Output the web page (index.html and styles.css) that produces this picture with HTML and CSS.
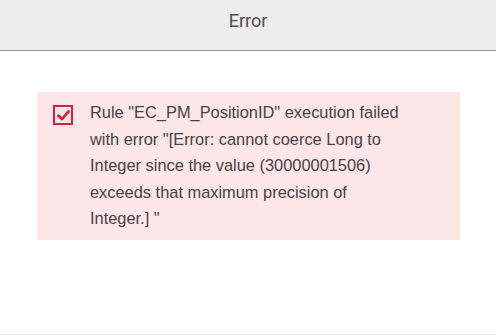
FILE: index.html
```html
<!DOCTYPE html>
<html>
<head>
<meta charset="utf-8">
<link rel="stylesheet" href="styles.css">
</head>
<body>
<div class="page">
  <header class="header">Error</header>
  <main class="main">
    <div class="alert">
      <span class="check">
        <svg width="13" height="13" viewBox="0 0 12 12"><path d="M1.4 6.3 L4.6 9.3 L10.6 2.4" fill="none" stroke="#d61f3b" stroke-width="2.6" stroke-linecap="round" stroke-linejoin="round"/></svg>
      </span>
      <p class="message">Rule "EC_PM_PositionID" execution failed with error "[Error: cannot coerce Long to Integer since the value (30000001506) exceeds that maximum precision of Integer.] "</p>
    </div>
  </main>
  <footer class="footer"></footer>
</div>
</body>
</html>
```
FILE: styles.css
```css
html, body {
  margin: 0;
  padding: 0;
  background: #fff;
}
.page {
  height: 336px;
  display: flex;
  flex-direction: column;
}
.header {
  height: 51px;
  box-sizing: border-box;
  padding-bottom: 9px;
  background: #ededed;
  border-bottom: 1px solid #999;
  display: flex;
  align-items: center;
  justify-content: center;
  font-family: Roboto, "Liberation Sans", sans-serif;
  font-size: 18px;
  color: #505050;
}
.main {
  flex: 1;
  padding: 41px 36px 0 37px;
}
.alert {
  background: #fce6e8;
  height: 148px;
  box-sizing: border-box;
  padding: 7px 0 0 16px;
  display: flex;
  align-items: flex-start;
}
.check {
  width: 16px;
  height: 16px;
  border: 2px solid #d61f3b;
  margin-top: 6px;
  display: flex;
  align-items: center;
  justify-content: center;
  flex: none;
}
.message {
  margin: 0 0 0 17px;
  width: 314px;
  font-family: "Liberation Sans", Arial, sans-serif;
  font-size: 16.4px;
  line-height: 26.6px;
  color: #444;
}
.footer {
  height: 0;
  border-top: 1px solid #e6e6e6;
  margin-bottom: 1px;
}
```
